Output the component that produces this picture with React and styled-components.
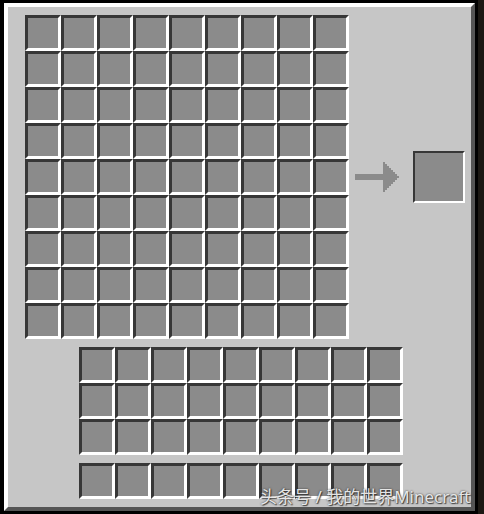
import React from "react";
import styled, { createGlobalStyle } from "styled-components";

const Global = createGlobalStyle`
  html, body { margin: 0; padding: 0; background: #1c1813; }
  body { width: 484px; height: 514px; overflow: hidden; font-family: "Noto Sans", "Noto Sans CJK SC", sans-serif; }
`;

const Page = styled.div`
  position: relative;
  width: 484px;
  height: 514px;
  background: #1c1813;
`;

const Frame = styled.div`
  width: 478px;
  height: 514px;
  box-sizing: border-box;
  background: #000;
  border-style: solid;
  border-color: #000;
  border-width: 3px 3px 3px 4px;
`;

const Bevel = styled.div`
  box-sizing: border-box;
  width: 100%;
  height: 100%;
  border-style: solid;
  border-width: 4px;
  border-color: #ffffff #555555 #555555 #ffffff;
  background: #c6c6c6;
  display: flex;
  flex-direction: column;
  padding-top: 8px;
`;

const TopRow = styled.div`
  display: flex;
  align-items: center;
  margin-left: 17px;
`;

const Grid = styled.div`
  display: grid;
  grid-template-columns: repeat(${(p) => p.$cols}, 36px);
  grid-auto-rows: 36px;
`;

const Slot = styled.div`
  box-sizing: border-box;
  width: 36px;
  height: 36px;
  background: #8b8b8b;
  border-style: solid;
  border-width: 3px;
  border-color: #373737 #ffffff #ffffff #373737;
`;

const BigSlot = styled.div`
  box-sizing: border-box;
  width: 52px;
  height: 52px;
  background: #8b8b8b;
  border-style: solid;
  border-width: 2px;
  border-color: #373737 #ffffff #ffffff #373737;
`;

const ArrowBox = styled.svg`
  display: block;
  width: 44px;
  height: 30px;
  margin: 0 14px 0 6px;
`;

const Inventory = styled.div`
  margin-left: 71px;
  margin-top: 8px;
  display: flex;
  flex-direction: column;
  gap: 8px;
`;

const Watermark = styled.div`
  position: absolute;
  left: 260px;
  top: 486px;
  font-size: 17px;
  line-height: 22px;
  color: rgba(245, 245, 245, 0.92);
  text-shadow: 0 0 2px rgba(40, 40, 40, 0.9), 1px 1px 1px rgba(40, 40, 40, 0.8);
  white-space: nowrap;
  font-family: "Noto Sans", "Noto Sans CJK SC", sans-serif;
`;

const slots = (n) => Array.from({ length: n }, (_, i) => <Slot key={i} />);

function Arrow() {
  const cols = [];
  for (let i = 0; i < 8; i++) {
    cols.push(<rect key={i} x={14 + i} y={i} width={1.02} height={15 - 2 * i} />);
  }
  return (
    <ArrowBox viewBox="0 0 22 15" shapeRendering="crispEdges">
      <g fill="#8b8b8b">
        <rect x="0" y="6" width="15" height="3" />
        {cols}
      </g>
    </ArrowBox>
  );
}

export default function App() {
  return (
    <Page>
      <Global />
      <Frame>
        <Bevel>
          <TopRow>
            <Grid $cols={9}>{slots(81)}</Grid>
            <Arrow />
            <BigSlot />
          </TopRow>
          <Inventory>
            <Grid $cols={9}>{slots(27)}</Grid>
            <Grid $cols={9}>{slots(9)}</Grid>
          </Inventory>
        </Bevel>
      </Frame>
      <Watermark>头条号 / 我的世界Minecraft</Watermark>
    </Page>
  );
}
